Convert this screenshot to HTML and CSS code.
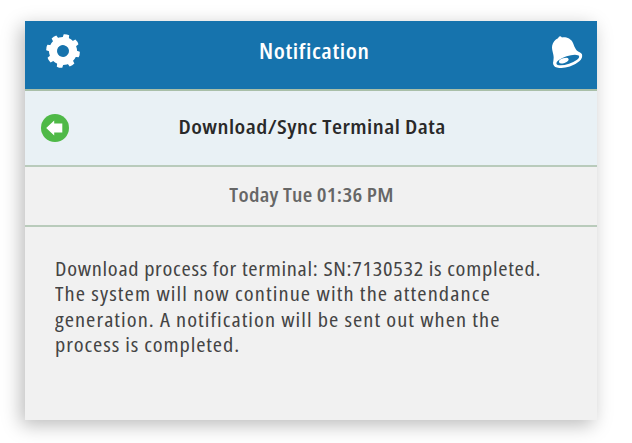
FILE: index.html
```html
<!DOCTYPE html>
<html lang="en">
<head>
  <meta charset="UTF-8" />
  <meta name="viewport" content="width=device-width, initial-scale=1.0" />
  <title>Notification</title>
  <link rel="stylesheet" href="styles.css">
</head>
<body>
  <div class="panel">
    <header class="topbar">
      <svg class="icon" viewBox="0 0 46 46">
        <defs><path id="tooth" d="M-3.2 -12 L-2.8 -16.6 Q0 -17.4 2.8 -16.6 L3.2 -12 Z" /></defs>
        <g transform="translate(23 23) rotate(12)" fill="#fff">
          <circle r="10" fill="none" stroke="#fff" stroke-width="8" />
          <use href="#tooth" />
          <use href="#tooth" transform="rotate(45)" />
          <use href="#tooth" transform="rotate(90)" />
          <use href="#tooth" transform="rotate(135)" />
          <use href="#tooth" transform="rotate(180)" />
          <use href="#tooth" transform="rotate(225)" />
          <use href="#tooth" transform="rotate(270)" />
          <use href="#tooth" transform="rotate(315)" />
        </g>
      </svg>
      <h1>Notification</h1>
      <svg class="icon" viewBox="0 0 46 46">
        <path fill="#fff" d="M13 10.2 Q14.6 6.6 17 9.4 C21 8.8 26 10.3 28 15 C30 20 31 23 35 24.5 Q37.8 26 37 28.5 L9 37 Q7.6 35 8.5 31.5 C9.5 27 6.2 22 7.2 17.5 Q8.3 12.5 13 10.2 Z" />
        <ellipse cx="22.7" cy="32" rx="15" ry="6.9" transform="rotate(-18 22.7 32)" fill="#fff" />
        <ellipse cx="22.8" cy="32" rx="11.9" ry="3.9" transform="rotate(-18 22.8 32)" fill="#1673ad" />
        <ellipse cx="18.8" cy="32.6" rx="5" ry="2.4" transform="rotate(-18 18.8 32.6)" fill="#fff" />
      </svg>
    </header>
    <div class="subject">
      <svg class="back" viewBox="0 0 28 28">
        <circle cx="14" cy="14" r="14" fill="#4fb947" />
        <path fill="#fff" d="M5.2 14 L13.2 6.6 V9.6 H21.3 V18.4 H13.2 V21.4 Z" />
      </svg>
      <h2>Download/Sync Terminal Data</h2>
    </div>
    <div class="time"><span>Today Tue 01:36 PM</span></div>
    <div class="message">
      <span class="line first">Download process for terminal: SN:7130532 is completed.</span>
      <span class="line second">The system will now continue with the attendance</span>
      <span class="line third">generation. A notification will be sent out when the</span>
      <span class="line fourth">process is completed.</span>
    </div>
  </div>
</body>
</html>
```
FILE: styles.css
```css
body { margin: 0; height: 443px; overflow: hidden; box-sizing: border-box; padding: 21px 0 0 25px; background: #fff; font-family: "Open Sans", "Noto Sans", sans-serif; font-stretch: 75%; }
.panel { box-sizing: border-box; width: 572px; height: 399px; background: #f1f1f1; box-shadow: -4px 5px 18px rgba(0,0,0,0.27); }
.topbar { display: flex; align-items: center; justify-content: space-between; height: 68px; padding: 0 6px 0 15px; background: #1673ad; border-bottom: 2px solid #a9bfa8; color: #fff; }
.icon { width: 46px; height: 46px; margin-bottom: 8px; }
h1, h2 { margin: 0; font-weight: 600; }
h1 { padding: 0 3px 8px 0; font-size: 21px; letter-spacing: 0.5px; transform: scaleX(1.14); }
h2 { padding: 0 0 3px 2px; font-size: 20px; letter-spacing: 0.41px; transform: scaleX(1.15); }
.subject { display: grid; grid-template-columns: 28px 1fr 28px; align-items: center; height: 74px; padding: 0 16px; background: #e9f1f5; border-bottom: 2px solid #b9cbbb; color: #292929; text-align: center; }
.back { width: 28px; height: 28px; }
.time { height: 58px; line-height: 56px; border-bottom: 2px solid #b9cbbb; color: #666; text-align: center; font-size: 19px; font-weight: 600; letter-spacing: 0.25px; }
.time span { display: inline-block; padding-left: 1px; transform: scaleX(1.15); }
.message { padding: 29px 30px; color: #444; font-size: 20px; line-height: 25.3px; }
.line { display: block; white-space: nowrap; transform: scaleX(1.12); transform-origin: left; }
.first { letter-spacing: 0.63px; }
.second { letter-spacing: 0.98px; }
.third { letter-spacing: 0.92px; }
.fourth { letter-spacing: 0.8px; }
```
